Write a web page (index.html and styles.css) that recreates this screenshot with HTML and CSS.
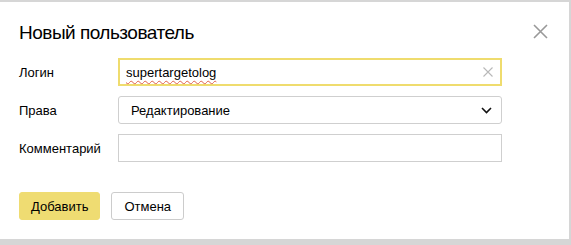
FILE: index.html
```html
<!DOCTYPE html>
<html lang="ru">
<head>
    <meta charset="UTF-8">
    <meta name="viewport" content="width=device-width, initial-scale=1.0">
    <title>Новый пользователь</title>
    <link rel="stylesheet" href="styles.css">
</head>
<body>
    <div class="dialog">
        <div class="dialog-head">
            <h1>Новый пользователь</h1>
            <button class="close" aria-label="Закрыть">
                <svg width="15" height="15" viewBox="0 0 15 15">
                    <path d="M1 1 L14 14 M14 1 L1 14" stroke="#999" stroke-width="1.6" fill="none"/>
                </svg>
            </button>
        </div>

        <div class="form">
            <label class="label">Логин</label>
            <div class="field field-focus">
                <span class="value misspelled">supertargetolog</span>
                <svg class="clear" width="10" height="10" viewBox="0 0 10 10">
                    <path d="M0.5 0.5 L9.5 9.5 M9.5 0.5 L0.5 9.5" stroke="#b8b8b8" stroke-width="1.1" fill="none"/>
                </svg>
            </div>

            <label class="label">Права</label>
            <div class="field field-select">
                <span class="value">Редактирование</span>
                <svg class="arrow" width="11" height="7" viewBox="0 0 11 7">
                    <path d="M1 1 L5.5 5.5 L10 1" stroke="#111" stroke-width="1.6" fill="none"/>
                </svg>
            </div>

            <label class="label">Комментарий</label>
            <div class="field"></div>
        </div>

        <div class="actions">
            <button class="btn btn-action">Добавить</button>
            <button class="btn">Отмена</button>
        </div>
    </div>
</body>
</html>
```

FILE: styles.css
```css
body {
    margin: 0;
    background: #d6d6d6;
    font-family: "Liberation Sans", Arial, sans-serif;
    color: #000;
}
.dialog {
    margin-top: 2px;
    width: 569px;
    height: 237px;
    box-sizing: border-box;
    padding: 19px 21px 0 19px;
    background: #fff;
}
.dialog-head {
    display: flex;
    justify-content: space-between;
    align-items: flex-start;
}
h1 {
    margin: 0;
    font-size: 19px;
    line-height: 24px;
    letter-spacing: -0.5px;
    font-weight: normal;
}
.close {
    margin-top: 3px;
    padding: 0;
    border: 0;
    background: none;
    width: 15px;
    height: 15px;
    cursor: pointer;
}
.close svg {
    display: block;
}
.form {
    margin-top: 13px;
    display: grid;
    grid-template-columns: 99px 384px;
    row-gap: 10px;
    align-items: center;
}
.label {
    font-size: 13px;
}
.field {
    height: 28px;
    box-sizing: border-box;
    border: 1px solid #cfcfcf;
    display: flex;
    align-items: center;
    justify-content: space-between;
    font-size: 13px;
}
.field-focus {
    border: 2px solid #efdc6e;
    padding: 0 7px 0 6px;
}
.field-select {
    border-radius: 3px;
    padding: 0 9px 0 12px;
}
.misspelled {
    text-decoration: underline wavy #e0604a;
    text-decoration-thickness: 1px;
    text-underline-offset: 3px;
}
.clear, .arrow {
    display: block;
}
.actions {
    margin-top: 30px;
    display: flex;
    gap: 11px;
}
.btn {
    height: 28px;
    padding: 0 12px;
    font-family: inherit;
    font-size: 13px;
    color: #000;
    background: #fff;
    border: 1px solid #cccccc;
    border-radius: 3px;
    cursor: pointer;
}
.btn-action {
    padding: 0 11px;
    background: #efdc72;
    border-color: #efdc72;
}
```
